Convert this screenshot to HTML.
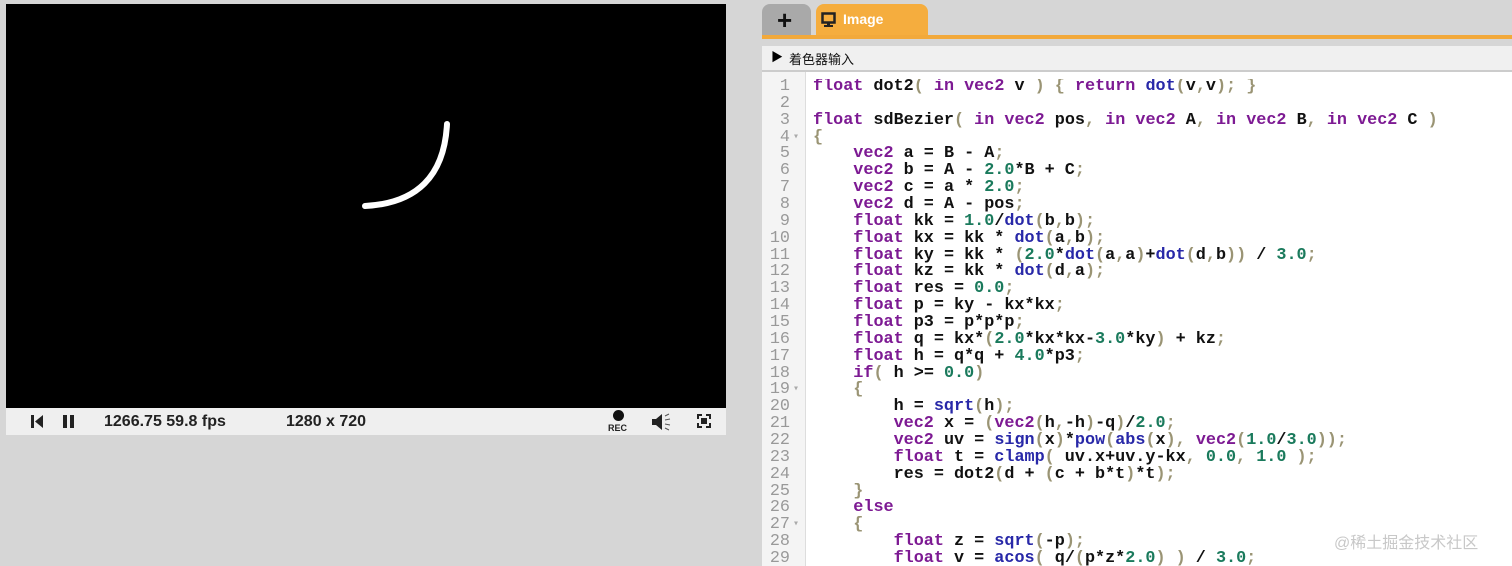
<!DOCTYPE html>
<html style="overflow:hidden;height:566px"><head><meta charset="utf-8"><style>
body{margin:0;width:1512px;height:566px;overflow:hidden;background:#d6d6d6;font-family:"Liberation Sans","Noto Sans CJK SC",sans-serif;position:relative}
.abs{position:absolute}
#canvas{left:6px;top:4px;width:720px;height:404px;background:#000}
#bar{left:6px;top:408px;width:720px;height:27px;background:#efefef;font-weight:bold;font-size:16px;color:#222}
#tabs .t{position:absolute;top:4px;height:32px;border-radius:8px 8px 0 0}
#code{left:762px;top:72px;width:750px;height:494px;background:#fff}
#gut{left:762px;top:72px;width:43px;height:494px;background:#f4f4f4;border-right:1px solid #ddd}
pre{margin:0;font-family:"Liberation Mono",monospace;font-weight:bold;font-size:16.8px;line-height:16.86px;position:absolute;max-height:487px;overflow:hidden}
#ln{left:762px;top:79px;width:28px;text-align:right;color:#999;font-weight:normal}
#src{left:813px;top:79px;color:#111}
.k{color:#7d1a93}.f{color:#2828a8}.n{color:#1a7a5c}.p{color:#9a9474}
</style></head><body>
<div class="abs" id="canvas"><svg width="720" height="404"><path d="M359 202 Q437 198 441 120" stroke="#fff" stroke-width="6" fill="none" stroke-linecap="round"/></svg></div>
<div class="abs" id="bar">
<svg class="abs" style="left:24px;top:6px" width="14" height="15"><rect x="1" y="1" width="3" height="13" fill="#222"/><path d="M13 1 L5 7.5 L13 14Z" fill="#222"/></svg>
<svg class="abs" style="left:56px;top:6px" width="14" height="15"><rect x="1" y="1" width="4" height="13" fill="#222"/><rect x="8" y="1" width="4" height="13" fill="#222"/></svg>
<span class="abs" style="left:98px;top:5px">1266.75 59.8 fps</span>
<span class="abs" style="left:280px;top:5px">1280 x 720</span>
<div class="abs" style="left:607px;top:2px;width:11px;height:11px;border-radius:50%;background:#111"></div>
<span class="abs" style="left:602px;top:15px;font-size:9px">REC</span>
<svg class="abs" style="left:645px;top:4px" width="22" height="20"><path d="M1 7h4l6-5v16l-6-5H1z" fill="#222"/><path d="M14 4l4-2M14 8l5-1M14 12l5 1M14 16l4 2" stroke="#555" stroke-width="1"/></svg>
<svg class="abs" style="left:690px;top:5px" width="16" height="16"><path d="M1 1h5v2h-3v3h-2zM15 1h-5v2h3v3h2zM1 15h5v-2h-3v-3h-2zM15 15h-5v-2h3v-3h2z" fill="#222"/><rect x="5" y="5" width="6" height="6" fill="#222"/></svg>
</div>
<div id="tabs">
<div class="t" style="left:762px;width:49px;background:#a9a9a9"><span class="abs" style="left:15px;top:1px;font-size:26px;font-weight:bold;color:#111">+</span></div>
<div class="t" style="left:816px;width:112px;background:#f5ad3e"><svg class="abs" style="left:5px;top:8px" width="16" height="16"><rect x="1.5" y="1.5" width="12" height="9" fill="none" stroke="#222" stroke-width="2.5"/><rect x="6" y="11" width="3" height="3" fill="#222"/><rect x="3" y="13" width="9" height="2" fill="#222"/></svg><span class="abs" style="left:27px;top:7px;font-size:14px;font-weight:bold;color:#fff">Image</span></div>
</div>
<div class="abs" style="left:762px;top:35px;width:750px;height:4px;background:#f2a93b"></div>
<div class="abs" style="left:762px;top:46px;width:750px;height:24px;background:#f0f0f0;border-bottom:2px solid #ccc"><span class="abs" style="left:9px;top:2px;font-size:12px">▶</span><span class="abs" style="left:27px;top:3px;font-size:13px;color:#111">着色器输入</span></div>
<div class="abs" id="code"></div>
<div class="abs" id="gut"></div>
<pre id="ln">1
2
3
4
5
6
7
8
9
10
11
12
13
14
15
16
17
18
19
20
21
22
23
24
25
26
27
28
29</pre>
<pre class="abs" style="left:793px;top:79px;color:#aaa;font-size:10px;font-weight:normal;line-height:16.86px">


 
▾














▾







▾</pre>
<pre id="src"><span class="k">float</span> dot2<span class="p">(</span> <span class="k">in</span> <span class="k">vec2</span> v <span class="p">)</span> <span class="p">{</span> <span class="k">return</span> <span class="f">dot</span><span class="p">(</span>v<span class="p">,</span>v<span class="p">);</span> <span class="p">}</span>

<span class="k">float</span> sdBezier<span class="p">(</span> <span class="k">in</span> <span class="k">vec2</span> pos<span class="p">,</span> <span class="k">in</span> <span class="k">vec2</span> A<span class="p">,</span> <span class="k">in</span> <span class="k">vec2</span> B<span class="p">,</span> <span class="k">in</span> <span class="k">vec2</span> C <span class="p">)</span>
<span class="p">{</span>
    <span class="k">vec2</span> a = B - A<span class="p">;</span>
    <span class="k">vec2</span> b = A - <span class="n">2.0</span>*B + C<span class="p">;</span>
    <span class="k">vec2</span> c = a * <span class="n">2.0</span><span class="p">;</span>
    <span class="k">vec2</span> d = A - pos<span class="p">;</span>
    <span class="k">float</span> kk = <span class="n">1.0</span>/<span class="f">dot</span><span class="p">(</span>b<span class="p">,</span>b<span class="p">);</span>
    <span class="k">float</span> kx = kk * <span class="f">dot</span><span class="p">(</span>a<span class="p">,</span>b<span class="p">);</span>
    <span class="k">float</span> ky = kk * <span class="p">(</span><span class="n">2.0</span>*<span class="f">dot</span><span class="p">(</span>a<span class="p">,</span>a<span class="p">)</span>+<span class="f">dot</span><span class="p">(</span>d<span class="p">,</span>b<span class="p">))</span> / <span class="n">3.0</span><span class="p">;</span>
    <span class="k">float</span> kz = kk * <span class="f">dot</span><span class="p">(</span>d<span class="p">,</span>a<span class="p">);</span>
    <span class="k">float</span> res = <span class="n">0.0</span><span class="p">;</span>
    <span class="k">float</span> p = ky - kx*kx<span class="p">;</span>
    <span class="k">float</span> p3 = p*p*p<span class="p">;</span>
    <span class="k">float</span> q = kx*<span class="p">(</span><span class="n">2.0</span>*kx*kx-<span class="n">3.0</span>*ky<span class="p">)</span> + kz<span class="p">;</span>
    <span class="k">float</span> h = q*q + <span class="n">4.0</span>*p3<span class="p">;</span>
    <span class="k">if</span><span class="p">(</span> h &gt;= <span class="n">0.0</span><span class="p">)</span>
    <span class="p">{</span>
        h = <span class="f">sqrt</span><span class="p">(</span>h<span class="p">);</span>
        <span class="k">vec2</span> x = <span class="p">(</span><span class="k">vec2</span><span class="p">(</span>h<span class="p">,</span>-h<span class="p">)</span>-q<span class="p">)</span>/<span class="n">2.0</span><span class="p">;</span>
        <span class="k">vec2</span> uv = <span class="f">sign</span><span class="p">(</span>x<span class="p">)</span>*<span class="f">pow</span><span class="p">(</span><span class="f">abs</span><span class="p">(</span>x<span class="p">),</span> <span class="k">vec2</span><span class="p">(</span><span class="n">1.0</span>/<span class="n">3.0</span><span class="p">));</span>
        <span class="k">float</span> t = <span class="f">clamp</span><span class="p">(</span> uv.x+uv.y-kx<span class="p">,</span> <span class="n">0.0</span><span class="p">,</span> <span class="n">1.0</span> <span class="p">);</span>
        res = dot2<span class="p">(</span>d + <span class="p">(</span>c + b*t<span class="p">)</span>*t<span class="p">);</span>
    <span class="p">}</span>
    <span class="k">else</span>
    <span class="p">{</span>
        <span class="k">float</span> z = <span class="f">sqrt</span><span class="p">(</span>-p<span class="p">);</span>
        <span class="k">float</span> v = <span class="f">acos</span><span class="p">(</span> q/<span class="p">(</span>p*z*<span class="n">2.0</span><span class="p">)</span> <span class="p">)</span> / <span class="n">3.0</span><span class="p">;</span></pre>
<span class="abs" style="left:1334px;top:529px;font-size:16px;color:#c8c8c8">@稀土掘金技术社区</span>
</body></html>
